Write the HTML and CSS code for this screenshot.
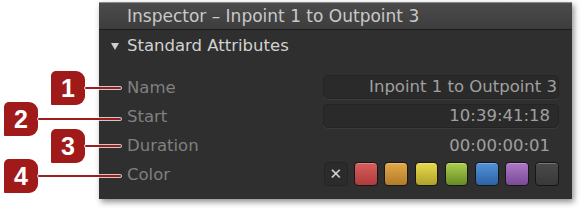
FILE: index.html
```html
<!DOCTYPE html>
<html lang="en">
<head>
    <meta charset="UTF-8">
    <title>Inspector</title>
    <link rel="stylesheet" href="styles.css">
</head>
<body>

    <div id="figure">
        <div class="inspector">
            <div class="titlebar">Inspector &ndash; Inpoint 1 to Outpoint 3</div>

            <div class="section_head">
                <span class="disclosure"></span>
                Standard Attributes
            </div>

            <div class="attrs">
                <div class="label">Name</div>
                <div class="field field_name">Inpoint 1 to Outpoint 3</div>

                <div class="label">Start</div>
                <div class="field field_start">10:39:41:18</div>

                <div class="label">Duration</div>
                <div class="value">00:00:00:01</div>

                <div class="label">Color</div>
                <div class="swatches">
                    <div class="swatch none">&#x2715;</div>
                    <div class="swatch red"></div>
                    <div class="swatch orange"></div>
                    <div class="swatch yellow"></div>
                    <div class="swatch green"></div>
                    <div class="swatch blue"></div>
                    <div class="swatch purple"></div>
                    <div class="swatch gray"></div>
                </div>
            </div>
        </div>

        <!-- callouts -->
        <div class="callout c1"><div class="badge">1</div><div class="leader"></div></div>
        <div class="callout c2"><div class="badge">2</div><div class="leader"></div></div>
        <div class="callout c3"><div class="badge">3</div><div class="leader"></div></div>
        <div class="callout c4"><div class="badge">4</div><div class="leader"></div></div>
    </div>

</body>
</html>
```

FILE: styles.css
```css
body {
    margin: 0;
    background: #ffffff;
    font-family: "DejaVu Sans", "Liberation Sans", sans-serif;
}

#figure {
    position: relative;
    width: 582px;
    height: 208px;
    padding: 2px 0 0 99px;
    box-sizing: border-box;
    overflow: hidden;
}

.inspector {
    width: 473px;
    height: 197px;
    background: #2f2f2f;
    box-shadow: 2px 3px 6px rgba(0, 0, 0, 0.45);
}

.titlebar {
    height: 26px;
    line-height: 26px;
    padding-left: 28px;
    border-top: 1px solid #8c8c8c;
    border-bottom: 1px solid #1b1b1b;
    background: linear-gradient(#4b4b4b, #3d3d3d);
    color: #c9c9c9;
    font-size: 17px;
    white-space: nowrap;
}

.section_head {
    position: relative;
    height: 39px;
    padding: 6px 0 0 28px;
    line-height: 20px;
    color: #d2d2d2;
    font-size: 16.5px;
}

.disclosure {
    position: absolute;
    left: 12px;
    top: 13px;
    border-left: 4px solid transparent;
    border-right: 4px solid transparent;
    border-top: 7px solid #cfcfcf;
}

.attrs {
    display: grid;
    grid-template-columns: 196px 236px;
    grid-auto-rows: 24px;
    row-gap: 5px;
    align-items: center;
    padding-left: 28px;
}

.label {
    color: #808080;
    font-size: 16.5px;
}

.field {
    height: 22px;
    line-height: 22px;
    border: 1px solid #242424;
    border-radius: 5px;
    background: #2a2a2a;
    box-shadow: 0 1px 0 #3b3b3b;
    color: #a0a0a0;
    font-size: 16.5px;
    text-align: right;
    white-space: nowrap;
    overflow: hidden;
}

.field_name {
    padding-right: 1px;
}

.field_start {
    padding-right: 8px;
}

.value {
    padding-right: 9px;
    color: #a0a0a0;
    font-size: 16.5px;
    text-align: right;
}

.swatches {
    display: flex;
    gap: 6.4px;
    margin-left: 1px;
}

.swatch {
    width: 22px;
    height: 22px;
    border: 1px solid #161616;
    border-radius: 4px;
    box-shadow: inset 0 1px 0 rgba(255, 255, 255, 0.25);
}

.swatch.none {
    border-color: #252525;
    background: #2b2b2b;
    box-shadow: none;
    color: #d4d4d4;
    font-size: 15px;
    line-height: 22px;
    text-align: center;
}

.red { background: linear-gradient(#d85e5c, #ad3c3b); }
.orange { background: linear-gradient(#e2a848, #b27b28); }
.yellow { background: linear-gradient(#e8da4c, #b0a22a); }
.green { background: linear-gradient(#accf4c, #668a26); }
.blue { background: linear-gradient(#5292d8, #2d62a6); }
.purple { background: linear-gradient(#ac78c6, #7a4b96); }
.gray { background: linear-gradient(#4a4a4a, #393939); }

/* numbered callouts over the screenshot */
.callout {
    position: absolute;
    display: flex;
    align-items: center;
}

.c1 { left: 51px; top: 71px; }
.c2 { left: 4px; top: 102px; }
.c3 { left: 51px; top: 129px; }
.c4 { left: 4px; top: 159px; }

.badge {
    width: 34px;
    height: 34px;
    border-radius: 5px 9px 9px 1px;
    background: #a11a1a;
    color: #ffffff;
    font-family: "Liberation Sans", Arial, sans-serif;
    font-size: 25px;
    font-weight: bold;
    line-height: 35px;
    text-align: center;
}

.leader {
    height: 2px;
    background: #9e1c1c;
    box-shadow: 0 0 0 1px rgba(255, 255, 255, 0.75);
    border-radius: 1px;
}

.c1 .leader, .c3 .leader { width: 36px; }
.c2 .leader, .c4 .leader { width: 83px; }
```
